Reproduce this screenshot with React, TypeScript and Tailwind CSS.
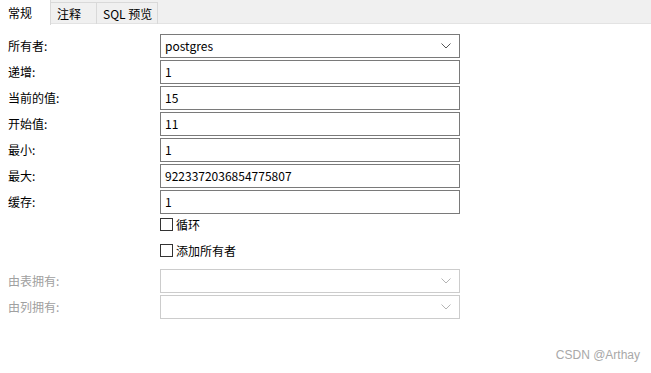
import React from 'react';

const font = { fontFamily: '"Microsoft YaHei", "Noto Sans CJK SC", "Liberation Sans", sans-serif' };

function Chevron({ disabled }: { disabled?: boolean }) {
  return (
    <svg width="10" height="6" viewBox="0 0 10 6" className="shrink-0">
      <path d="M0.5 0.5 L5 5 L9.5 0.5" fill="none" stroke={disabled ? '#b4b4b4' : '#555555'} strokeWidth="1" />
    </svg>
  );
}

function Field({ label, value, select, disabled }: { label: string; value?: string; select?: boolean; disabled?: boolean }) {
  return (
    <div className="flex items-center h-[24px]">
      <div className={`w-[160px] pl-2 text-[12px] ${disabled ? 'text-[#a0a0a0]' : 'text-black'}`}>{label}</div>
      <div
        className={`w-[300px] h-[24px] flex items-center justify-between pl-[4px] pr-[8px] text-[12px] text-black border ${
          disabled ? 'border-[#cccccc]' : 'border-[#7a7a7a]'
        }`}
      >
        <span>{value}</span>
        {select && <Chevron disabled={disabled} />}
      </div>
    </div>
  );
}

function Check({ label }: { label: string }) {
  return (
    <div className="flex items-center h-[13px] pl-[160px]">
      <div className="w-[13px] h-[13px] border border-[#333333] bg-white" />
      <span className="ml-[3px] text-[12px] text-black leading-none">{label}</span>
    </div>
  );
}

export default function App() {
  const tabs = ['常规', '注释', 'SQL 预览'];

  return (
    <div className="relative w-[651px] h-[373px] bg-white overflow-hidden" style={font}>
      <div className="flex h-[24px] bg-[#f0f0f0] border-b border-[#e3e3e3]">
        {tabs.map((t, i) =>
          i === 0 ? (
            <div key={t} className="h-[25px] w-[51px] bg-white border-r border-[#d9d9d9] pl-2 flex items-center text-[12px] text-black">
              {t}
            </div>
          ) : (
            <div
              key={t}
              className={`mt-[2px] h-[22px] border-t border-r border-[#d9d9d9] pl-[6px] flex items-center text-[12px] text-black ${
                i === 1 ? 'w-[46px]' : 'w-[61px]'
              }`}
            >
              {t}
            </div>
          )
        )}
      </div>

      <div className="pt-[10px] flex flex-col gap-[2px]">
        <Field label="所有者:" value="postgres" select />
        <Field label="递增:" value="1" />
        <Field label="当前的值:" value="15" />
        <Field label="开始值:" value="11" />
        <Field label="最小:" value="1" />
        <Field label="最大:" value="9223372036854775807" />
        <Field label="缓存:" value="1" />
      </div>

      <div className="mt-[4px] flex flex-col gap-[13px]">
        <Check label="循环" />
        <Check label="添加所有者" />
      </div>

      <div className="mt-[12px] flex flex-col gap-[2px]">
        <Field label="由表拥有:" select disabled />
        <Field label="由列拥有:" select disabled />
      </div>

      <div className="absolute right-[11px] bottom-[9px] text-[12px] text-[#a8a8a8]" style={{ fontFamily: '"Liberation Sans", sans-serif' }}>
        CSDN @Arthay
      </div>
    </div>
  );
}
